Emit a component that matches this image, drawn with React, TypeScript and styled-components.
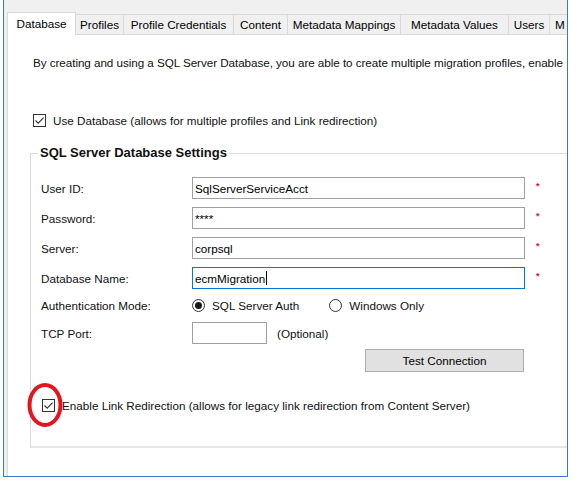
import React from "react";
import styled, { createGlobalStyle } from "styled-components";

const Global = createGlobalStyle`
  html, body { margin: 0; padding: 0; background: #ffffff; }
  body {
    font-family: "Liberation Sans", Arial, sans-serif;
    font-size: 11.7px;
    color: #111;
  }
  #root { width: 575px; height: 480px; overflow: hidden; }
`;

const Frame = styled.div`
  margin-left: 3px;
  width: 565px;
  height: 477px;
  box-sizing: border-box;
  border: 1px solid #3f77c6;
  border-top: none;
  background: #f0f0f0;
  display: flex;
  flex-direction: column;
  overflow: hidden;
  padding-left: 3px;
`;

const TabStrip = styled.div`
  height: 34px;
  flex-shrink: 0;
  display: flex;
  align-items: flex-end;
  padding-left: 1px;
`;

const Tab = styled.div<{ $w: number; $active?: boolean }>`
  box-sizing: border-box;
  width: ${(p) => p.$w}px;
  flex-shrink: 0;
  height: ${(p) => (p.$active ? 23 : 20)}px;
  margin-left: -1px;
  margin-bottom: ${(p) => (p.$active ? -1 : 0)}px;
  border: 1px solid #d9d9d9;
  border-bottom: none;
  background: ${(p) => (p.$active ? "#ffffff" : "#f0f0f0")};
  position: relative;
  z-index: ${(p) => (p.$active ? 2 : 1)};
  display: flex;
  align-items: center;
  justify-content: ${(p) => (p.$w < 30 ? "flex-start" : "center")};
  padding-left: ${(p) => (p.$w < 30 ? 5 : 0)}px;
  white-space: nowrap;
  overflow: hidden;
  color: #000;
  padding-bottom: 1px;
`;

const Page = styled.div`
  flex: 1;
  background: #ffffff;
  border-left: 1px solid #d9d9d9;
  border-top: 1px solid #d9d9d9;
  padding-left: 22px;
  overflow: hidden;
  display: flex;
  flex-direction: column;
`;

const Description = styled.div`
  margin: 20px 0 0 3px;
  line-height: 16px;
  white-space: nowrap;
  letter-spacing: -0.06px;
`;

const CheckRow = styled.div<{ $mt: number; $ml: number }>`
  position: relative;
  display: flex;
  align-items: center;
  height: 16px;
  margin-top: ${(p) => p.$mt}px;
  margin-left: ${(p) => p.$ml}px;
  white-space: nowrap;
`;

const CheckBox = styled.span<{ $gap: number }>`
  box-sizing: border-box;
  width: 13px;
  height: 13px;
  border: 1px solid #333;
  background: #fff;
  display: inline-flex;
  align-items: center;
  justify-content: center;
  margin-right: ${(p) => p.$gap}px;
  flex-shrink: 0;
`;

const Group = styled.fieldset`
  margin: 17px -60px 0 0;
  padding: 16px 0 33px 10px;
  border: 1px solid #dcdcdc;
  border-bottom-width: 2px;
  border-bottom-color: #e6e6e6;
  min-width: 0;
`;

const Legend = styled.legend`
  font-weight: bold;
  font-size: 13px;
  line-height: 16px;
  padding: 0 2px;
  margin-left: -3px;
  color: #111;
`;

const Row = styled.div<{ $h: number; $mt: number }>`
  display: flex;
  align-items: center;
  height: ${(p) => p.$h}px;
  margin-top: ${(p) => p.$mt}px;
  white-space: nowrap;
`;

const Label = styled.span`
  width: 151px;
  flex-shrink: 0;
`;

const TextBox = styled.div<{ $w: number; $focused?: boolean }>`
  box-sizing: border-box;
  width: ${(p) => p.$w}px;
  height: 22px;
  border: 1px solid ${(p) => (p.$focused ? "#0078d7" : "#a0a0a0")};
  background: #fff;
  padding-left: 2px;
  display: flex;
  align-items: center;
  color: #000;
  flex-shrink: 0;
`;

const Caret = styled.span`
  display: inline-block;
  width: 1px;
  height: 14px;
  background: #000;
  margin-left: 1px;
`;

const Required = styled.span`
  color: #e81123;
  font-size: 9px;
  font-weight: bold;
  margin-left: 11px;
  line-height: 1;
  margin-top: -4px;
`;

const RadioOption = styled.span<{ $mr: number }>`
  display: inline-flex;
  align-items: center;
  margin-right: ${(p) => p.$mr}px;
`;

const RadioCircle = styled.span<{ $checked?: boolean }>`
  box-sizing: border-box;
  width: 13px;
  height: 13px;
  border-radius: 50%;
  border: 1px solid #333;
  background: #fff;
  display: inline-flex;
  align-items: center;
  justify-content: center;
  margin-right: 7px;
  &::after {
    content: "";
    width: 7px;
    height: 7px;
    border-radius: 50%;
    background: ${(p) => (p.$checked ? "#1a1a1a" : "transparent")};
  }
`;

const Hint = styled.span`
  margin-left: 10px;
`;

const Button = styled.div`
  box-sizing: border-box;
  width: 159px;
  height: 23px;
  margin-left: 324px;
  background: #e1e1e1;
  border: 1px solid #adadad;
  display: flex;
  align-items: center;
  justify-content: center;
  color: #000;
`;

const Annotation = styled.svg`
  position: absolute;
  left: -15px;
  top: -15px;
  pointer-events: none;
`;

const Check = () => (
  <svg width="11" height="11" viewBox="0 0 11 11">
    <polyline points="1.5,5.5 4.2,8.2 9.6,2.6" fill="none" stroke="#333" strokeWidth="1.1" />
  </svg>
);

const tabs: { label: string; w: number }[] = [
  { label: "Database", w: 69 },
  { label: "Profiles", w: 49 },
  { label: "Profile Credentials", w: 111 },
  { label: "Content", w: 55 },
  { label: "Metadata Mappings", w: 114 },
  { label: "Metadata Values", w: 109 },
  { label: "Users", w: 42 },
  { label: "M", w: 20 },
];

const fields: { label: string; value: string; focused?: boolean }[] = [
  { label: "User ID:", value: "SqlServerServiceAcct" },
  { label: "Password:", value: "****" },
  { label: "Server:", value: "corpsql" },
  { label: "Database Name:", value: "ecmMigration", focused: true },
];

export default function App() {
  return (
    <>
      <Global />
      <Frame>
        <TabStrip>
          {tabs.map((t, i) => (
            <Tab key={t.label} $w={t.w} $active={i === 0}>
              {t.label}
            </Tab>
          ))}
        </TabStrip>
        <Page>
          <Description>
            By creating and using a SQL Server Database, you are able to create multiple migration profiles, enable
          </Description>
          <CheckRow $mt={41} $ml={3}>
            <CheckBox $gap={7}>
              <Check />
            </CheckBox>
            Use Database (allows for multiple profiles and Link redirection)
          </CheckRow>
          <Group>
            <Legend>SQL Server Database Settings</Legend>
            {fields.map((f, i) => (
              <Row key={f.label} $h={22} $mt={i === 0 ? 0 : 8}>
                <Label>{f.label}</Label>
                <TextBox $w={333} $focused={f.focused}>
                  {f.value}
                  {f.focused && <Caret />}
                </TextBox>
                <Required>*</Required>
              </Row>
            ))}
            <Row $h={17} $mt={8}>
              <Label>Authentication Mode:</Label>
              <RadioOption $mr={30}>
                <RadioCircle $checked />
                SQL Server Auth
              </RadioOption>
              <RadioOption $mr={0}>
                <RadioCircle />
                Windows Only
              </RadioOption>
            </Row>
            <Row $h={22} $mt={8}>
              <Label>TCP Port:</Label>
              <TextBox $w={75} />
              <Hint>(Optional)</Hint>
            </Row>
            <Row $h={23} $mt={5}>
              <Button>Test Connection</Button>
            </Row>
            <CheckRow $mt={25} $ml={1}>
              <CheckBox $gap={7}>
                <Check />
              </CheckBox>
              Enable Link Redirection (allows for legacy link redirection from Content Server)
              <Annotation width="36" height="46" viewBox="0 0 36 46">
                <ellipse cx="18" cy="23" rx="15.5" ry="20" fill="none" stroke="#e8131b" strokeWidth="4" />
              </Annotation>
            </CheckRow>
          </Group>
        </Page>
      </Frame>
    </>
  );
}
